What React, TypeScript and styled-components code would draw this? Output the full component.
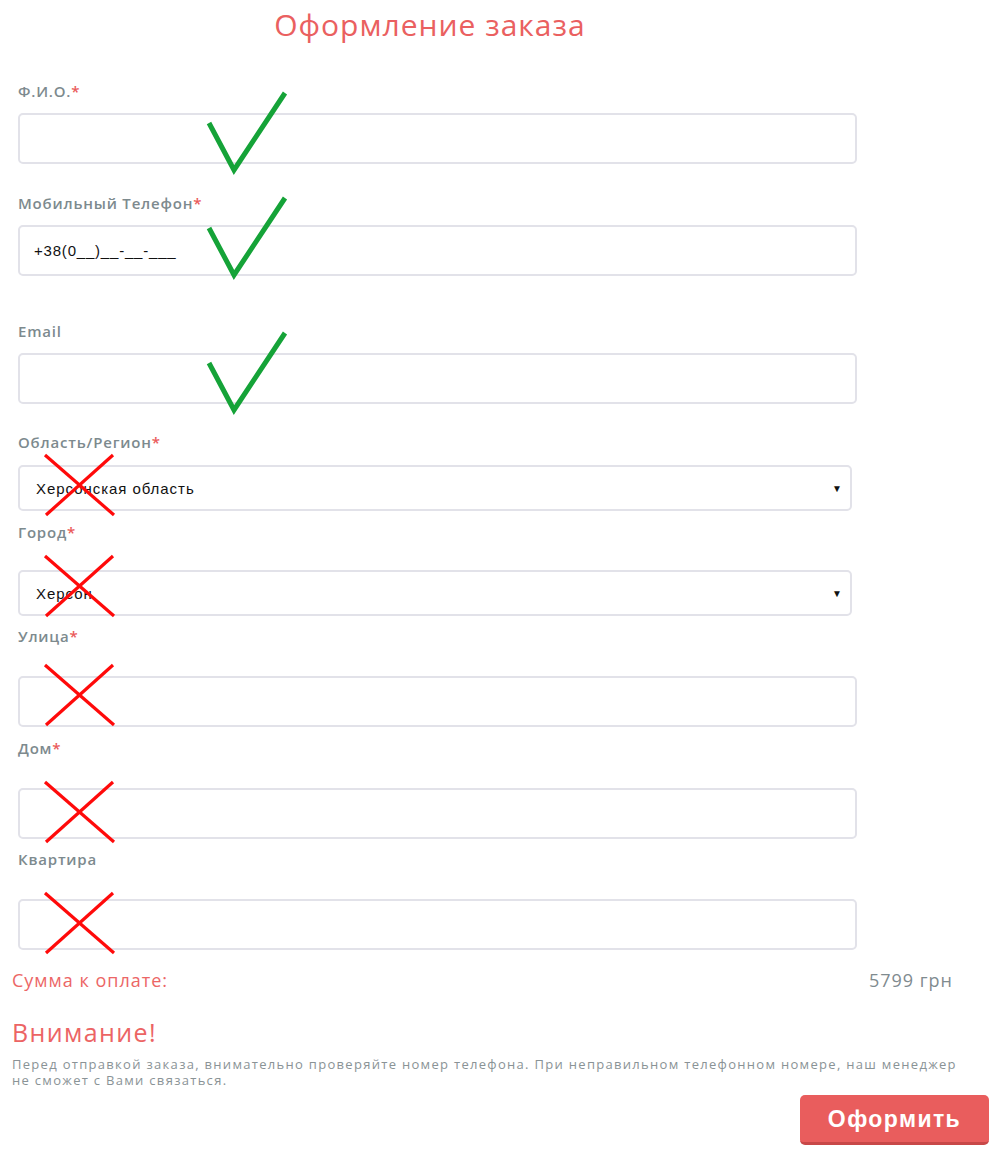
import React from 'react';
import styled, { createGlobalStyle } from 'styled-components';

const GlobalStyle = createGlobalStyle`
  html, body {
    margin: 0;
    padding: 0;
    background: #ffffff;
  }
  body {
    font-family: 'Open Sans', 'Liberation Sans', sans-serif;
  }
`;

const Page = styled.div`
  position: relative;
  width: 1000px;
  min-height: 1154px;
  box-sizing: border-box;
  padding: 5px 11px 0 12px;
`;

const Title = styled.h1`
  width: 836px;
  margin: 0;
  text-align: center;
  font-family: 'Open Sans', sans-serif;
  font-weight: 400;
  font-size: 30px;
  line-height: 40px;
  letter-spacing: 1px;
  color: #ea6060;
`;

const Form = styled.div`
  padding-left: 6px;
  display: flex;
  flex-direction: column;
`;

const Field = styled.div<{ $top: number }>`
  margin-top: ${p => p.$top}px;
  display: flex;
  flex-direction: column;
`;

const Label = styled.label<{ $gap: number }>`
  font-family: 'Open Sans', sans-serif;
  font-weight: 600;
  font-size: 15px;
  line-height: 20px;
  letter-spacing: 0.8px;
  color: #7d8a8e;
  margin-bottom: ${p => p.$gap}px;

  span {
    color: #ea5a5a;
  }
`;

const Input = styled.div`
  box-sizing: border-box;
  width: 839px;
  height: 51px;
  border: 2px solid #e2e2e9;
  border-radius: 5px;
  padding: 0 14px;
  display: flex;
  align-items: center;
  font-family: 'Liberation Sans', Arial, sans-serif;
  font-size: 15px;
  letter-spacing: 0.8px;
  color: #111;
`;

const Select = styled.div`
  box-sizing: border-box;
  width: 834px;
  height: 46px;
  border: 2px solid #e2e2e9;
  border-radius: 5px;
  padding: 0 8px 0 16px;
  display: flex;
  align-items: center;
  justify-content: space-between;
  font-family: 'Liberation Sans', Arial, sans-serif;
  font-size: 15px;
  letter-spacing: 0.95px;
  color: #111;
`;

const Arrow = styled.span`
  font-size: 10px;
  letter-spacing: 0;
  color: #111;
`;

const SumRow = styled.div`
  margin-top: 18px;
  display: flex;
  justify-content: space-between;
  padding-right: 36px;
  font-size: 18px;
  line-height: 24px;
  letter-spacing: 1px;
`;

const SumLabel = styled.span`
  color: #ec6666;
`;

const SumValue = styled.span`
  color: #7f8b8f;
`;

const Warning = styled.h2`
  margin: 25px 0 0;
  font-weight: 400;
  font-size: 25px;
  line-height: 30px;
  letter-spacing: 1.4px;
  color: #ec6464;
`;

const Note = styled.p`
  margin: 9px 0 0;
  width: 955px;
  font-size: 13px;
  line-height: 16px;
  letter-spacing: 1.3px;
  color: #8a9396;
`;

const Actions = styled.div`
  margin-top: 7px;
  display: flex;
  justify-content: flex-end;
`;

const SubmitButton = styled.button`
  box-sizing: border-box;
  width: 189px;
  height: 50px;
  border: none;
  border-bottom: 3px solid #c84848;
  border-radius: 5px;
  background: #e95d5d;
  color: #fff;
  font-family: 'Liberation Sans', Arial, sans-serif;
  font-weight: 700;
  font-size: 23px;
  letter-spacing: 1.4px;
  padding-top: 2px;
  cursor: pointer;
`;

const Marks = styled.svg`
  position: absolute;
  left: 0;
  top: 0;
  pointer-events: none;
`;

const checks = [
  [123, 93],
  [228, 198],
  [363, 333],
];

const crosses = [455, 556, 665, 782, 893];

export default function App() {
  return (
    <>
      <GlobalStyle />
      <Page>
        <Title>Оформление заказа</Title>
        <Form>
          <Field $top={36}>
            <Label $gap={12}>Ф.И.О.<span>*</span></Label>
            <Input />
          </Field>
          <Field $top={29}>
            <Label $gap={12}>Мобильный Телефон<span>*</span></Label>
            <Input>+38(0__)__-__-___</Input>
          </Field>
          <Field $top={45}>
            <Label $gap={12}>Email</Label>
            <Input />
          </Field>
          <Field $top={28}>
            <Label $gap={13}>Область/Регион<span>*</span></Label>
            <Select>
              Херсонская область
              <Arrow>▼</Arrow>
            </Select>
          </Field>
          <Field $top={11}>
            <Label $gap={28}>Город<span>*</span></Label>
            <Select>
              Херсон
              <Arrow>▼</Arrow>
            </Select>
          </Field>
          <Field $top={10}>
            <Label $gap={30}>Улица<span>*</span></Label>
            <Input />
          </Field>
          <Field $top={11}>
            <Label $gap={30}>Дом<span>*</span></Label>
            <Input />
          </Field>
          <Field $top={10}>
            <Label $gap={30}>Квартира</Label>
            <Input />
          </Field>
        </Form>
        <SumRow>
          <SumLabel>Сумма к оплате:</SumLabel>
          <SumValue>5799 грн</SumValue>
        </SumRow>
        <Warning>Внимание!</Warning>
        <Note>
          Перед отправкой заказа, внимательно проверяйте номер телефона. При неправильном телефонном номере, наш менеджер не сможет с Вами связаться.
        </Note>
        <Actions>
          <SubmitButton>Оформить</SubmitButton>
        </Actions>

        <Marks width="1000" height="1154" viewBox="0 0 1000 1154">
          {checks.map(([y1, y0]) => (
            <polyline
              key={y1}
              points={`209,${y1} 234,${y1 + 47} 285,${y0}`}
              fill="none"
              stroke="#15a338"
              strokeWidth="5"
              strokeLinejoin="miter"
            />
          ))}
          {crosses.map(y => (
            <g key={y} stroke="#ff0a0a" strokeWidth="3.2">
              <line x1="45" y1={y} x2="114" y2={y + 60} />
              <line x1="113" y1={y} x2="46" y2={y + 60} />
            </g>
          ))}
        </Marks>
      </Page>
    </>
  );
}
